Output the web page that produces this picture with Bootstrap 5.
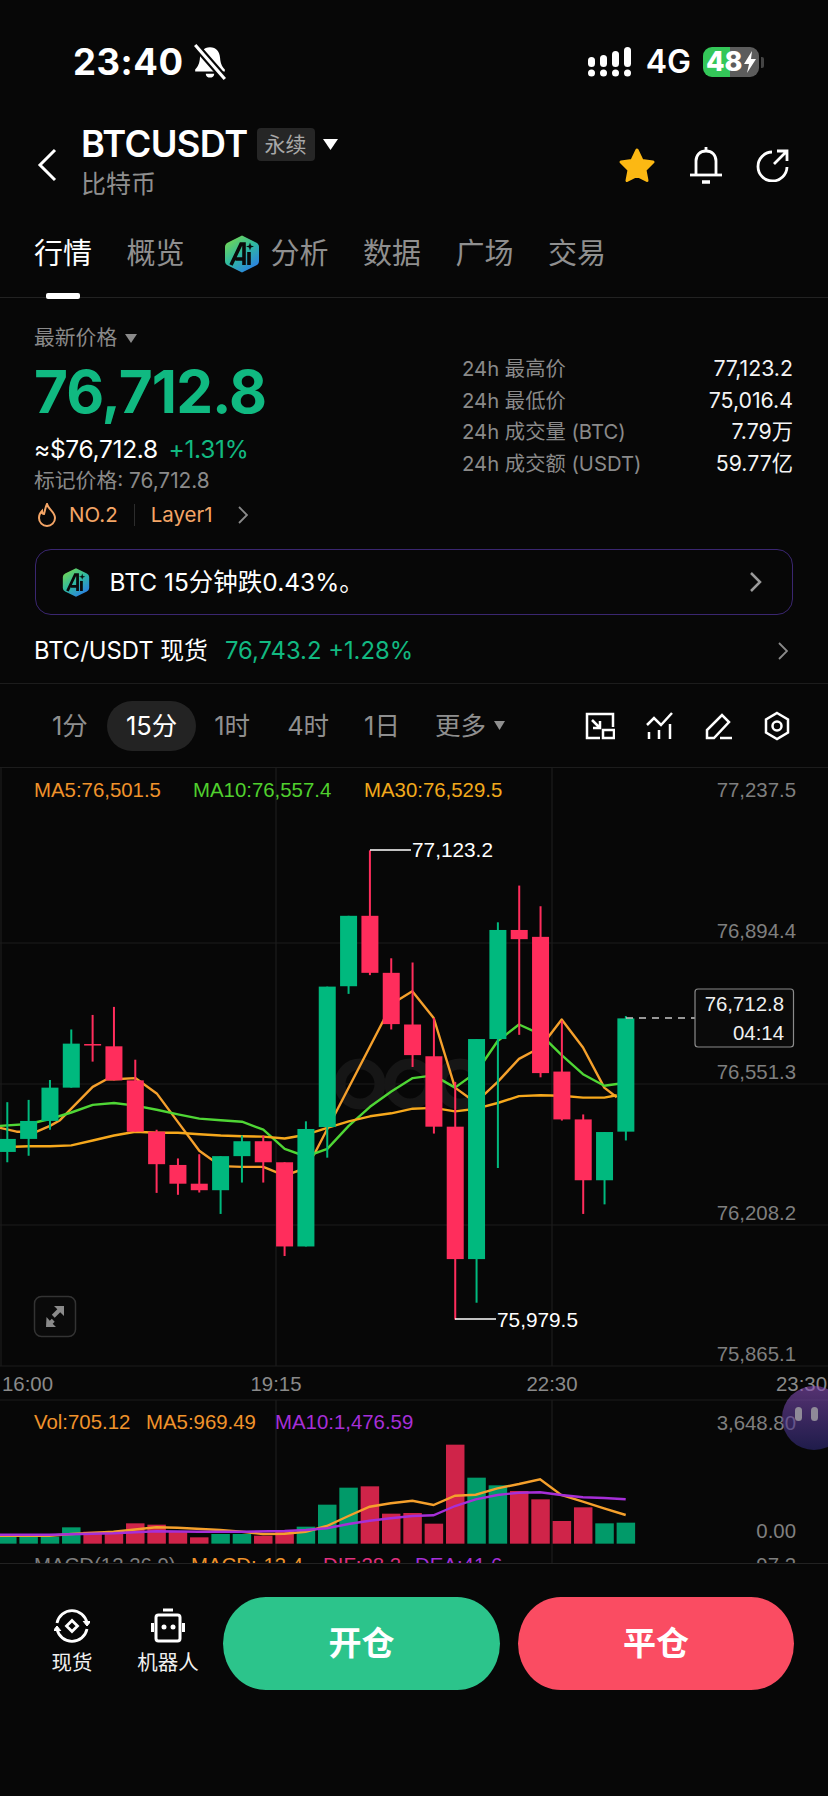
<!DOCTYPE html>
<html lang="zh-CN">
<head>
  <meta charset="UTF-8">
  <meta name="viewport" content="width=device-width, initial-scale=1.0">
  <title>BTCUSDT</title>
  <link href="https://cdn.jsdelivr.net/npm/bootstrap@5.3.0/dist/css/bootstrap.min.css" rel="stylesheet">
  <style>
    body { background: #070707; color: #fff; font-family: Inter, "Noto Sans CJK SC", sans-serif; width: 828px; height: 1796px; overflow: hidden; }
    .muted-txt { color: #8a8a8a; }
    .up-txt { color: #12b981; }
    .status-row { height: 100px; padding: 24px 64px 0 73px; }
    .status-time { font-size: 36.5px; font-weight: 700; line-height: 76px; letter-spacing: .5px; }
    .status-right { padding-top: 22px; }
    .status-net { font-size: 32px; font-weight: 600; line-height: 1; }
    .batt { width: 56px; height: 30px; border-radius: 9px; background: linear-gradient(90deg, #34c759 48%, #5c5c5c 48%); font-size: 27px; font-weight: 800; line-height: 30px; padding-left: 3px; }
    .batt-nub { width: 3px; height: 11px; margin-left: 2px; background: #444; border-radius: 0 2px 2px 0; }
    .head-row { height: 122px; padding: 0 38px 0 37px; }
    .head-back { margin-top: 48px; }
    .head-icons { gap: 33px; padding-top: 46px; }
    .sym-name { font-size: 36.3px; font-weight: 600; line-height: 40px; letter-spacing: -.6px; }
    .sym-type { background: #262626; color: #a8a8a8; font-size: 21px; line-height: 33px; height: 33px; padding: 0 8px; border-radius: 4px; margin-left: 9px; }
    .sym-sub { font-size: 25px; line-height: 32px; color: #8f8f8f; margin-top: 4px; }
    .tab-row { height: 76px; padding: 0 35px 12px 34px; border-bottom: 1px solid #222; font-size: 29px; }
    .tab-item { color: #8f8f8f; position: relative; line-height: 40px; margin-left: 34.5px; }
    .tab-item.on { color: #fff; margin-left: 0; }
    .tab-item.on::after { content: ""; position: absolute; left: 12px; bottom: -25px; width: 34px; height: 6px; background: #fff; border-radius: 2px; }
    .tab-ai { margin-left: 39px; }
    .tab-item.after-ai { margin-left: 11px; }
    .stat-row { padding: 25px 35px 0 34px; }
    .st-label { font-size: 20.8px; line-height: 30px; }
    .st-price { font-size: 58.5px; font-weight: 700; line-height: 70px; margin-top: 4px; letter-spacing: -.9px; color: #10b981; }
    .st-usd { font-size: 24.5px; line-height: 34px; margin-top: 5px; letter-spacing: -.3px; }
    .st-tags { font-size: 20.5px; line-height: 34px; margin-top: 2px; color: #f4a566; }
    .st-flame { margin-left: 3px; }
    .st-sep { width: 1px; height: 22px; background: #2c2c2c; margin: 0 16px; }
    .st-no { margin-left: 12px; }
    .st-more { margin-left: 24px; }
    .st-right { width: 331px; padding-top: 30px; font-size: 20.3px; line-height: 31.5px; }
    .st-right .w-txt { color: #f4f4f4; font-size: 21.3px; }
    .ai-box { margin: 17px 35px 0 34.5px; height: 66px; border: 1.5px solid #3a2670; border-radius: 16px; padding: 0 30px 0 26px; font-size: 24.5px; }
    .spot-row { height: 69px; padding: 3px 40px 0 34px; border-bottom: 1px solid #1c1c1c; font-size: 23.8px; }
    .spot-px { margin-left: 17px; }
    .tf-row { height: 84px; padding: 0 38px 0 33.5px; border-bottom: 1px solid #1c1c1c; font-size: 25.5px; color: #8f8f8f; }
    .tf-item { padding: 0 18.5px; height: 50px; line-height: 50px; border-radius: 25px; }
    .tf-item.on { background: #232323; color: #fff; margin-left: 1px; }
    .tf-item.tf-day { margin-left: -2px; }
    .tf-item.tf-more { margin-left: -2px; }
    .tf-tools { gap: 31px; }
    .chart-box { height: 796px; overflow: hidden; border-bottom: 1px solid #222; }
    .chart-box svg { display: block; font-family: "Liberation Sans", sans-serif; font-size: 20.4px; }
    .chart-box .mark-txt { font-size: 20.8px; }
    .foot-row { padding: 33px 34px 0 0; }
    .foot-item { width: 80px; margin-left: 32px; padding-top: 11px; font-size: 20.5px; line-height: 28px; color: #f0f0f0; }
    .foot-item + .foot-item { margin-left: 16px; }
    .foot-item svg { display: block; margin: 0 auto 5px; }
    .trade-btn { height: 93px; border: 0; border-radius: 46px / 50px; color: #fff; font-size: 33px; font-weight: 700; }
    .trade-btn.go { width: 277px; margin-left: 15px; background: #2cc48b; }
    .trade-btn.go:hover { background: #2cc48b; color: #fff; }
    .trade-btn.stop { width: 276px; margin-left: 18px; background: #fa4c62; }
    .trade-btn.stop:hover { background: #fa4c62; color: #fff; }
  </style>
</head>
<body>
  <svg width="0" height="0" class="position-absolute">
    <defs>
      <linearGradient id="aiGrad" x1="0.1" y1="0" x2="0.8" y2="1">
        <stop offset="0" stop-color="#7bd94a"/><stop offset=".5" stop-color="#2fb9a0"/><stop offset="1" stop-color="#2b7bea"/>
      </linearGradient>
      <symbol id="aiLogo" viewBox="0 0 36 40">
        <path d="M18 1.5 32 8.5Q35 10 35 13V27Q35 30 32 31.5L18 38.5 4 31.5Q1 30 1 27V13Q1 10 4 8.5Z" fill="url(#aiGrad)"/>
        <path d="M7 31 17 10H20V31M11.500 25H19" fill="none" stroke="#0a0a0a" stroke-width="3.600"/>
        <path d="M25 18V31" stroke="#0a0a0a" stroke-width="3.600"/>
        <path d="M26 8.500 27 11.500 30 12.500 27 13.500 26 16.500 25 13.500 22 12.500 25 11.500Z" fill="#0a0a0a"/>
      </symbol>
    </defs>
  </svg>

  <div class="status-row d-flex justify-content-between align-items-start">
    <div class="d-flex align-items-center">
      <span class="status-time">23:40</span>
      <svg class="ms-2" width="36" height="36" viewBox="0 0 34 34">
        <path d="M17 3c6 0 9 4 9.500 10 .4 5 1.500 8 4.500 11v2H3v-2c3-3 4.100-6 4.500-11C8 7 11 3 17 3Z" fill="#fff"/>
        <path d="M13 28h8c0 5-8 5-8 0Z" fill="#fff"/>
        <path d="M3 1 31 33" stroke="#070707" stroke-width="7"/>
        <path d="M3 1 31 33" stroke="#fff" stroke-width="3"/>
      </svg>
    </div>
    <div class="status-right d-flex align-items-center gap-2">
      <svg width="46" height="32" viewBox="0 0 46 32" fill="#fff">
        <rect x="0" y="11" width="7" height="10" rx="3.500"/><rect x="12" y="9" width="7" height="12" rx="3.500"/><rect x="24" y="5" width="7" height="16" rx="3.500"/><rect x="36" y="1" width="7" height="20" rx="3.500"/>
        <circle cx="3.500" cy="27" r="3.500"/><circle cx="15.500" cy="27" r="3.500"/><circle cx="27.500" cy="27" r="3.500"/><circle cx="39.500" cy="27" r="3.500"/>
      </svg>
      <span class="status-net ms-1">4G</span>
      <div class="d-flex align-items-center ms-1">
        <div class="batt d-flex align-items-center">48<svg width="14" height="24" viewBox="0 0 14 24"><path d="M9 1 1 14h5l-2 9 9-14H8Z" fill="#fff"/></svg></div>
        <span class="batt-nub"></span>
      </div>
    </div>
  </div>

  <div class="head-row d-flex justify-content-between align-items-start">
    <div class="d-flex align-items-start">
      <svg class="head-back" width="20" height="34" viewBox="0 0 20 34"><path d="M18 2 3 17l15 15" fill="none" stroke="#fff" stroke-width="3"/></svg>
      <div class="ms-4 pt-4">
        <div class="d-flex align-items-center">
          <span class="sym-name">BTCUSDT</span>
          <span class="sym-type">永续</span>
          <svg class="ms-2" width="15" height="11" viewBox="0 0 15 11"><path d="M0 0h15L7.500 11Z" fill="#fff"/></svg>
        </div>
        <div class="sym-sub">比特币</div>
      </div>
    </div>
    <div class="head-icons d-flex align-items-center">
      <svg width="38" height="36" viewBox="0 0 38 36"><path d="M19 3 24 13.500 35 15 27 23 29 33.500 19 28.500 9 33.500 11 23 3 15 14 13.500Z" fill="#fcb813" stroke="#fcb813" stroke-width="3" stroke-linejoin="round"/></svg>
      <svg width="34" height="38" viewBox="0 0 34 38" fill="none" stroke="#fff" stroke-width="2.800"><path d="M7 28V15C7 9 11 5 17 5s10 4 10 10v13"/><path d="M1 29H33"/><path d="M13 36h8" stroke-width="3.500"/><path d="M17 1v4"/></svg>
      <svg width="34" height="34" viewBox="0 0 34 34" fill="none" stroke="#fff" stroke-width="2.800"><path d="M16 4A14.500 14.500 0 1 0 31 19"/><path d="M18 16 31 3M21 3h10v10"/></svg>
    </div>
  </div>

  <div class="tab-row d-flex align-items-center">
    <span class="tab-item on">行情</span>
    <span class="tab-item">概览</span>
    <svg class="tab-ai" width="36" height="40"><use href="#aiLogo"/></svg>
    <span class="tab-item after-ai">分析</span>
    <span class="tab-item">数据</span>
    <span class="tab-item">广场</span>
    <span class="tab-item">交易</span>
  </div>

  <div class="stat-row d-flex justify-content-between align-items-start">
    <div>
      <div class="st-label muted-txt d-flex align-items-center">最新价格<svg class="ms-2" width="12" height="9" viewBox="0 0 12 9"><path d="M0 0h12L6 9Z" fill="#8a8a8a"/></svg></div>
      <div class="st-price">76,712.8</div>
      <div class="st-usd">≈$76,712.8 <span class="up-txt ms-1">+1.31%</span></div>
      <div class="st-label muted-txt">标记价格: 76,712.8</div>
      <div class="st-tags d-flex align-items-center">
        <svg class="st-flame" width="20" height="24" viewBox="0 0 20 24" fill="none" stroke="#f4a566" stroke-width="2"><path d="M10 1c1 5 8 8 8 14a8 8 0 0 1-16 0c0-3 1-5 3-7 0 2 1 3 2 3 1-3 1-6 3-10Z"/></svg>
        <span class="st-no">NO.2</span>
        <span class="st-sep"></span>
        <span>Layer1</span>
        <svg class="st-more" width="11" height="18" viewBox="0 0 11 18"><path d="M2 1l8 8-8 8" fill="none" stroke="#8a8a8a" stroke-width="1.800"/></svg>
      </div>
    </div>
    <div class="st-right">
      <div class="d-flex justify-content-between"><span class="muted-txt">24h 最高价</span><span class="w-txt">77,123.2</span></div>
      <div class="d-flex justify-content-between"><span class="muted-txt">24h 最低价</span><span class="w-txt">75,016.4</span></div>
      <div class="d-flex justify-content-between"><span class="muted-txt">24h 成交量 (BTC)</span><span class="w-txt">7.79万</span></div>
      <div class="d-flex justify-content-between"><span class="muted-txt">24h 成交额 (USDT)</span><span class="w-txt">59.77亿</span></div>
    </div>
  </div>

  <div class="ai-box d-flex align-items-center justify-content-between">
    <div class="d-flex align-items-center">
      <svg width="28" height="31"><use href="#aiLogo"/></svg>
      <span class="ms-3 ps-1">BTC 15分钟跌0.43%。</span>
    </div>
    <svg width="14" height="22" viewBox="0 0 14 22"><path d="M3 2l9 9-9 9" fill="none" stroke="#9a9a9a" stroke-width="2.500"/></svg>
  </div>

  <div class="spot-row d-flex align-items-center justify-content-between">
    <div><span>BTC/USDT 现货</span><span class="up-txt spot-px">76,743.2 +1.28%</span></div>
    <svg width="11" height="20" viewBox="0 0 11 20"><path d="M2 2l8 8-8 8" fill="none" stroke="#8a8a8a" stroke-width="1.800"/></svg>
  </div>

  <div class="tf-row d-flex align-items-center justify-content-between">
    <div class="d-flex align-items-center">
      <span class="tf-item">1分</span>
      <span class="tf-item on">15分</span>
      <span class="tf-item">1时</span>
      <span class="tf-item">4时</span>
      <span class="tf-item tf-day">1日</span>
      <span class="tf-item tf-more d-flex align-items-center">更多<svg class="ms-2" width="11" height="9" viewBox="0 0 11 9"><path d="M0 0h11L5.500 9Z" fill="#8f8f8f"/></svg></span>
    </div>
    <div class="tf-tools d-flex align-items-center">
      <svg width="30" height="28" viewBox="0 0 30 28" fill="none" stroke="#fff" stroke-width="2.500"><path d="M15 26H2V2h26v13"/><rect x="18" y="18" width="11" height="8"/><path d="M7 8l8 8M15 9v7H8"/></svg>
      <svg width="28" height="28" viewBox="0 0 28 28" fill="none" stroke="#fff" stroke-width="2.500"><path d="M1 13 8 6l7 7L26 1"/><path d="M3 20v7M13 18v9M24 12v15"/></svg>
      <svg width="28" height="28" viewBox="0 0 28 28" fill="none" stroke="#fff" stroke-width="2.500"><path d="M2 26V18L17 3l7 7-15 16Z"/><path d="M15 26h12"/></svg>
      <svg width="26" height="30" viewBox="0 0 26 30" fill="none" stroke="#fff" stroke-width="2.500"><path d="M13 2l11 6.500v13L13 28 2 21.500v-13Z"/><circle cx="13" cy="15" r="4.500"/></svg>
    </div>
  </div>

  <div class="chart-box position-relative">
    <svg id="chart" width="828" height="796" viewBox="0 0 828 796">
      <g stroke="#1d1d1d" stroke-width="1.200">
        <path d="M0 175H828M0 316H828M0 457H828M0 598H828M0 632H828"/>
        <path d="M276 0V598M552 0V598M276 632V796M552 632V796M1 0V598"/>
      </g>
      <g fill="none" stroke="#161616" stroke-width="11"><circle cx="360" cy="316" r="20"/><circle cx="410" cy="316" r="20"/><circle cx="460" cy="316" r="20"/></g>
      <g id="lines" fill="none" stroke-width="2.400" stroke-linejoin="round"></g>
      <g id="candles"></g>
      <g id="vol"></g>

      <text x="34" y="29" fill="#f0932b">MA5:76,501.5</text>
      <text x="193" y="29" fill="#50d02e">MA10:76,557.4</text>
      <text x="364" y="29" fill="#f2aa1c">MA30:76,529.5</text>

      <g fill="#7f7f7f" text-anchor="end">
        <text x="796" y="29">77,237.5</text>
        <text x="796" y="170">76,894.4</text>
        <text x="796" y="311">76,551.3</text>
        <text x="796" y="452">76,208.2</text>
        <text x="796" y="593">75,865.1</text>
      </g>

      <path d="M370 82H411M455 551H496" stroke="#fff" stroke-width="1.500"/>
      <text class="mark-txt" x="412" y="89" fill="#fff">77,123.2</text>
      <text class="mark-txt" x="497" y="559" fill="#fff">75,979.5</text>

      <path d="M626 250H695" stroke="#c8c8c8" stroke-width="1.300" stroke-dasharray="7 6"/>
      <rect x="695" y="221" width="98.500" height="58" rx="3" fill="#0a0a0a" stroke="#8a8a8a" stroke-width="1.200"/>
      <g fill="#f0f0f0" text-anchor="end"><text x="784" y="243">76,712.8</text><text x="784" y="272">04:14</text></g>

      <rect x="34.500" y="528.500" width="41" height="40" rx="7" fill="#0a0a0a" stroke="#333" stroke-width="1.500"/>
      <g fill="#8a8a8a"><path d="M64 538H54l3.300 3.300-5.500 5.500 2.900 2.900 5.500-5.500L64 548Z"/><path d="M46 559h10l-3.300-3.300 2-2-2.900-2.900-2 2L46.500 549Z"/></g>

      <g fill="#8a8a8a">
        <text x="2" y="623">16:00</text>
        <text x="276" y="623" text-anchor="middle">19:15</text>
        <text x="552" y="623" text-anchor="middle">22:30</text>
        <text x="776" y="623">23:30</text>
      </g>

      <text x="34" y="661" fill="#f0932b">Vol:705.12</text>
      <text x="146" y="661" fill="#f0932b">MA5:969.49</text>
      <text x="275" y="661" fill="#a62fd8">MA10:1,476.59</text>
      <g fill="#7f7f7f" text-anchor="end">
        <text x="796" y="662">3,648.80</text>
        <text x="796" y="770">0.00</text>
        <text x="796" y="804">97.2</text>
      </g>
      <text x="34" y="804" fill="#7f7f7f">MACD(12,26,9)</text>
      <text x="191" y="804" fill="#f0932b">MACD:-13.4</text>
      <text x="323" y="804" fill="#e0307e">DIF:28.2</text>
      <text x="415" y="804" fill="#a62fd8">DEA:41.6</text>

      <defs><linearGradient id="bubbleGrad" x1="0" y1="0" x2="0" y2="1"><stop offset="0" stop-color="#8a4fb8"/><stop offset="1" stop-color="#2f2a78"/></linearGradient></defs>
      <circle cx="814" cy="650" r="32" fill="url(#bubbleGrad)" opacity=".6"/>
      <rect x="795" y="639" width="7" height="14" rx="3.500" fill="#8f8a98"/>
      <rect x="811" y="639" width="7" height="14" rx="3.500" fill="#8f8a98"/>
    </svg>
  </div>

  <div class="foot-row d-flex align-items-start">
    <div class="foot-item text-center">
      <svg width="36" height="36" viewBox="0 0 36 36" fill="none" stroke="#fff" stroke-width="2.800">
        <path d="M3 15A15.300 15.300 0 0 1 33 15"/><path d="M29 13l4 5 4-5" fill="#fff" stroke-width="1"/>
        <path d="M33 21A15.300 15.300 0 0 1 3 21"/><path d="M-1 23l4-5 4 5" fill="#fff" stroke-width="1"/>
        <path d="M18 12.500l5.500 5.500-5.500 5.500-5.500-5.500Z"/>
      </svg>
      现货
    </div>
    <div class="foot-item text-center">
      <svg width="36" height="36" viewBox="0 0 36 36" fill="none" stroke="#fff" stroke-width="3">
        <path d="M13 2h10" stroke-width="3"/>
        <rect x="6" y="7" width="24" height="26" rx="2.500"/>
        <path d="M2.500 15v9M33.500 15v9"/>
        <circle cx="14" cy="19" r="2.500" fill="#fff" stroke="none"/><circle cx="23" cy="19" r="2.500" fill="#fff" stroke="none"/>
      </svg>
      机器人
    </div>
    <button type="button" class="btn trade-btn go">开仓</button>
    <button type="button" class="btn trade-btn stop">平仓</button>
  </div>

  <script src="https://cdn.jsdelivr.net/npm/bootstrap@5.3.0/dist/js/bootstrap.bundle.min.js"></script>
  <script>
    // candles: [high, body top, body bottom, low, up?]  y is read off the reference, scale 2.613 per px
    var NS = 'http://www.w3.org/2000/svg';
    var candleData = [
      [868,964,998,1025,1],[862,917,964,1008,1],[810,830,917,940,1],[678,715,830,830,1],[640,716,720,762,0],
      [619,722,811,811,0],[757,811,945,945,0],[940,945,1030,1105,0],[1015,1032,1081,1110,0],[1004,1081,1098,1104,0],
      [1009,1009,1098,1160,1],[955,970,1009,1078,1],[955,970,1025,1078,0],[1025,1025,1245,1270,0],[918,938,1245,1245,1],
      [566,566,933,1013,1],[381,381,565,585,1],[210,381,530,536,0],[492,530,664,678,0],[503,665,745,776,0],
      [648,748,932,950,0],[815,932,1278,1436,0],[703,703,1278,1392,1],[398,418,703,1040,1],[302,418,442,692,0],
      [356,436,792,803,0],[655,788,913,916,0],[900,913,1072,1160,0],[946,946,1072,1135,1],[643,649,945,968,1]
    ];
    var ma5 = [[0,935],[50,945],[110,945],[150,930],[180,915],[214,885],[278,828],[320,808],[342,808],[406,805],[470,845],[534,920],[598,995],[662,1035],[726,1037],[790,1037],[854,1060],[918,1040],[945,1000],[1150,655],[1174,612],[1237,578],[1301,648],[1365,830],[1405,855],[1450,850],[1493,815],[1557,755],[1621,725],[1685,652],[1749,725],[1813,830],[1850,855]];
    var ma10 = [[0,930],[86,925],[150,912],[214,895],[278,875],[342,870],[406,877],[470,888],[534,900],[598,911],[662,915],[726,919],[790,940],[854,990],[918,1010],[982,990],[1046,930],[1110,880],[1174,840],[1238,805],[1301,798],[1365,830],[1429,790],[1493,708],[1557,665],[1621,690],[1685,745],[1749,795],[1813,825],[1877,817]];
    var ma30 = [[0,990],[22,985],[86,983],[150,983],[214,981],[278,968],[342,955],[406,945],[470,948],[534,948],[598,952],[662,955],[726,957],[790,958],[854,963],[918,953],[982,935],[1046,918],[1110,905],[1174,897],[1238,885],[1301,883],[1365,892],[1429,885],[1493,870],[1557,852],[1621,850],[1685,851],[1749,856],[1813,856],[1850,850]];
    var volData = [[530,1],[530,1],[530,1],[502,1],[515,0],[515,0],[490,0],[494,0],[515,0],[532,0],[522,1],[522,1],[527,0],[510,0],[500,1],[434,1],[383,1],[379,0],[461,0],[459,0],[491,0],[254,0],[353,1],[376,1],[393,0],[418,0],[483,0],[442,0],[490,1],[488,1]];
    var volMa5 = [[0,527],[94,527],[135,522],[215,515],[296,502],[336,503],[417,510],[458,515],[498,522],[539,521],[579,515],[619,498],[660,468],[700,440],[740,430],[781,422],[821,435],[862,407],[901,404],[942,385],[983,372],[1023,358],[1063,405],[1104,425],[1144,445],[1185,465]];
    var volMa10 = [[0,524],[94,524],[215,520],[296,514],[377,515],[458,515],[539,513],[579,510],[619,505],[660,492],[700,482],[740,475],[781,468],[821,466],[862,438],[901,418],[942,405],[983,398],[1023,397],[1063,405],[1104,412],[1144,414],[1185,418]];

    function add(parent, name, attrs) {
      var el = document.createElementNS(NS, name);
      for (var k in attrs) el.setAttribute(k, attrs[k]);
      parent.appendChild(el);
      return el;
    }
    function py(z) { return 2 + z / 2.613; }
    function vy(z) { return 592 + z / 3; }
    function cx(i) { return 7.3 + 21.33 * i; }

    var lines = document.getElementById('lines');
    [[ma5,'#f5a02c'],[ma10,'#4fd635'],[ma30,'#f6a81c']].forEach(function (l) {
      add(lines, 'polyline', { stroke: l[1], points: l[0].map(function (p) { return (p[0] / 3).toFixed(1) + ',' + py(p[1]).toFixed(1); }).join(' ') });
    });

    var candles = document.getElementById('candles');
    candleData.forEach(function (c, i) {
      var col = c[4] ? '#00b97e' : '#ff2d5c', x = cx(i);
      add(candles, 'rect', { x: x - 1, y: py(c[0]), width: 2, height: py(c[3]) - py(c[0]), fill: col });
      add(candles, 'rect', { x: x - 8.5, y: py(c[1]), width: 17, height: py(c[2]) - py(c[1]), fill: col });
    });

    var vol = document.getElementById('vol');
    volData.forEach(function (v, i) {
      add(vol, 'rect', { x: cx(i) - 9.25, y: vy(v[0]), width: 18.5, height: vy(551) - vy(v[0]), fill: v[1] ? '#019a69' : '#cf2449' });
    });
    [[volMa5,'#f5a02c'],[volMa10,'#a62fd8']].forEach(function (l) {
      add(vol, 'polyline', { fill: 'none', 'stroke-width': 2.4, stroke: l[1], points: l[0].map(function (p) { return (p[0] / 1.894).toFixed(1) + ',' + vy(p[1]).toFixed(1); }).join(' ') });
    });
  </script>
</body>
</html>
